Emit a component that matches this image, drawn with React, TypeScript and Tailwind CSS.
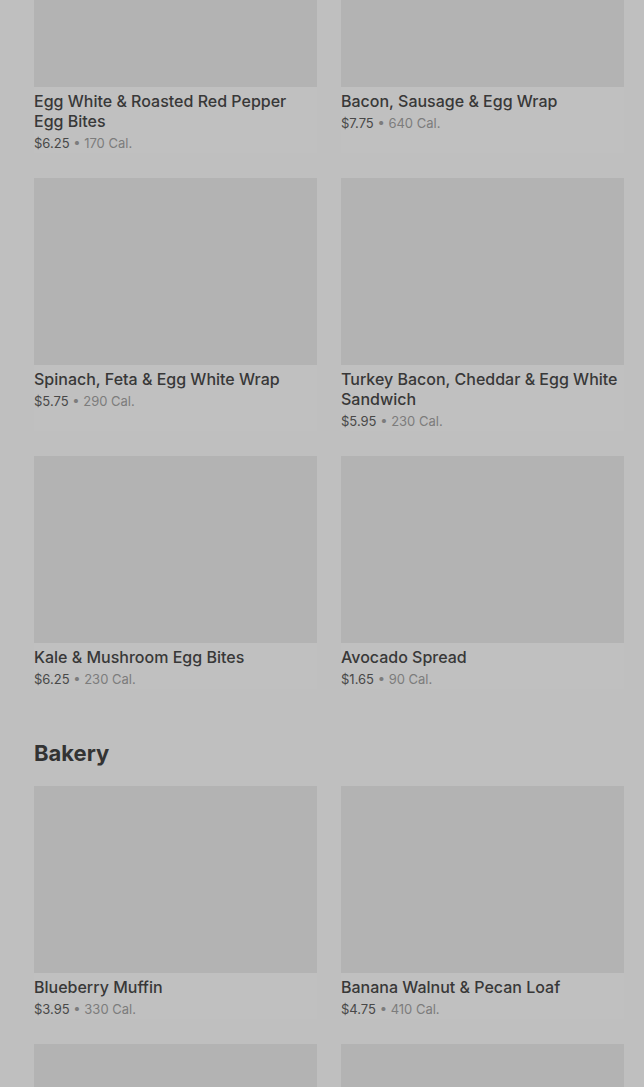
import React from 'react';

type Item = { name: string; price: string; cal: string };

const breakfast: Item[] = [
  { name: 'Egg White & Roasted Red Pepper Egg Bites', price: '$6.25', cal: '170 Cal.' },
  { name: 'Bacon, Sausage & Egg Wrap', price: '$7.75', cal: '640 Cal.' },
  { name: 'Spinach, Feta & Egg White Wrap', price: '$5.75', cal: '290 Cal.' },
  { name: 'Turkey Bacon, Cheddar & Egg White Sandwich', price: '$5.95', cal: '230 Cal.' },
  { name: 'Kale & Mushroom Egg Bites', price: '$6.25', cal: '230 Cal.' },
  { name: 'Avocado Spread', price: '$1.65', cal: '90 Cal.' },
];

const bakery: Item[] = [
  { name: 'Blueberry Muffin', price: '$3.95', cal: '330 Cal.' },
  { name: 'Banana Walnut & Pecan Loaf', price: '$4.75', cal: '410 Cal.' },
];

const ItemCard: React.FC<{ item: Item }> = ({ item }) => (
  <div className="flex flex-col bg-[#c0c0c0]">
    <div className="h-[187px] w-full bg-[#b3b3b3]" />
    <div className="pt-1">
      <div className="text-[16px] leading-5 font-medium text-[#383838]">{item.name}</div>
      <div className="mt-0.5 text-[13px] leading-5 text-[#484848]">
        {item.price}
        <span className="text-[#7c7c7c]"> • {item.cal}</span>
      </div>
    </div>
  </div>
);

export default function App() {
  return (
    <div
      className="h-[1087px] w-full overflow-hidden bg-[#bfbfbf]"
      style={{ fontFamily: 'Inter, "Noto Sans", sans-serif' }}
    >
      <div className="-mt-[100px] pl-[34px] pr-[20px]">
        {/* Breakfast items */}
        <div className="grid grid-cols-2 gap-x-6 gap-y-[25px]">
          {breakfast.map((item) => (
            <ItemCard key={item.name} item={item} />
          ))}
        </div>

        {/* Bakery */}
        <h2 className="mt-[50px] mb-[19px] text-[22px] leading-7 font-bold text-[#333333]">Bakery</h2>
        <div className="grid grid-cols-2 gap-x-6 gap-y-[25px]">
          {bakery.map((item) => (
            <ItemCard key={item.name} item={item} />
          ))}
          <div className="h-[187px] bg-[#b3b3b3]" />
          <div className="h-[187px] bg-[#b3b3b3]" />
        </div>
      </div>
    </div>
  );
}
